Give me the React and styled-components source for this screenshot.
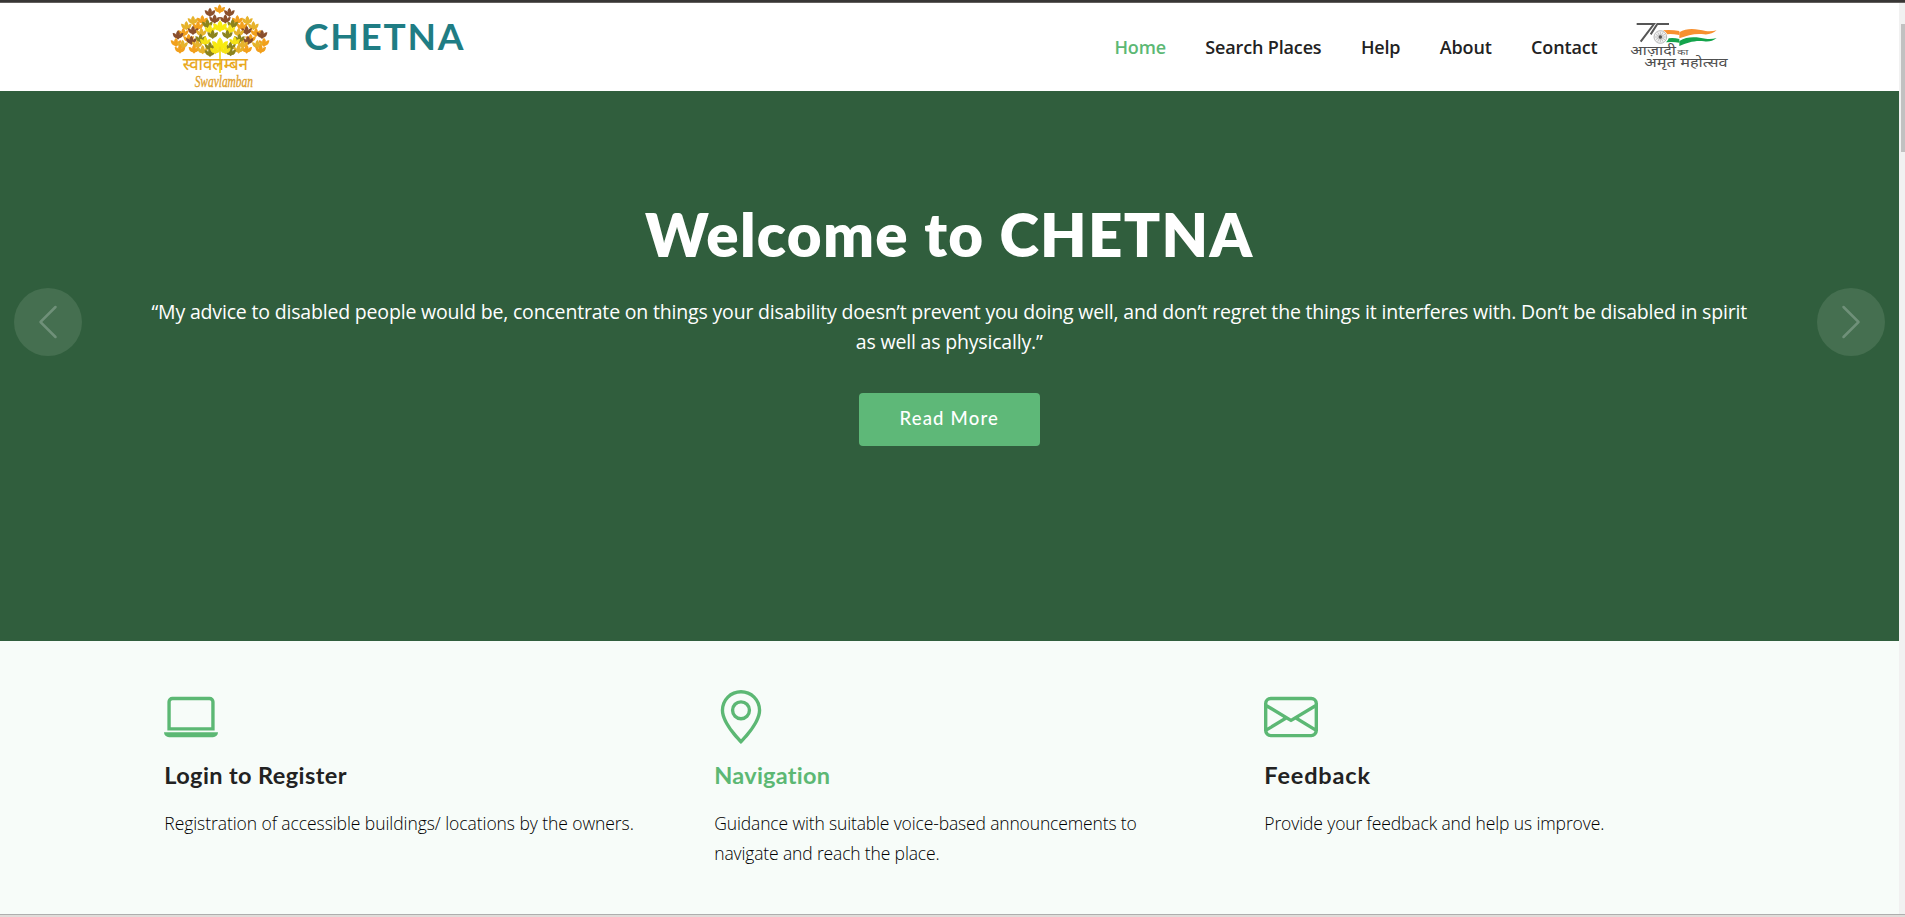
import React from "react";
import styled, { createGlobalStyle } from "styled-components";
import { BsLaptop, BsGeoAlt, BsEnvelope, BsChevronLeft, BsChevronRight } from "react-icons/bs";

const GREEN = "#5cb874";
const heading = `Lato, "Open Sans", sans-serif`;
const body = `"Open Sans", "Noto Sans", sans-serif`;

const GlobalStyle = createGlobalStyle`
  * { box-sizing: border-box; }
  body { margin: 0; background: #fff; overflow: hidden; }
  h1, h2, h3, p { margin: 0; }
  a { text-decoration: none; }
`;

const Frame = styled.div`
  display: flex;
  flex-direction: column;
  width: 100%;
  height: 917px;
  font-family: ${body};
`;

const TopEdge = styled.div`
  height: 3px;
  background: #383635;
  border-bottom: 1px solid #625f5e;
`;

const BottomEdge = styled.div`
  height: 3px;
  background: #e0dcd9;
  border-top: 1px solid #aeaeae;
`;

const Viewport = styled.div`
  display: flex;
  flex: 1;
  min-height: 0;
`;

const Page = styled.div`
  display: flex;
  flex-direction: column;
  flex: 1;
  min-width: 0;
`;

const ScrollTrack = styled.div`
  width: 6px;
  padding: 21px 0 0 2px;
  background: #f1f1f1;
`;

const ScrollThumb = styled.div`
  height: 128px;
  background: #c1c1c1;
`;

const Header = styled.header`
  display: flex;
  justify-content: space-between;
  height: 88px;
  padding: 0 168px;
  background: #fff;
`;

const Brand = styled.div`
  display: flex;
  gap: 32px;
`;

const BrandName = styled.h2`
  padding-top: 11px;
  font: 700 37px/44px ${heading};
  letter-spacing: 1.75px;
  color: #1f7d84;
`;

const NavBar = styled.nav`
  display: flex;
  align-items: flex-start;
`;

const NavLink = styled.a`
  margin: 32px 39.4px 0 0;
  font: 600 18px/25px ${body};
  letter-spacing: -0.15px;
  color: ${(p) => (p.$active ? GREEN : "#222222")};

  &:last-of-type { margin-right: 26.5px; }
`;

const FestivalMark = styled.svg`
  width: 110px;
  height: 60px;
  margin: 12px -3px 0 0;
`;

const Hero = styled.section`
  display: flex;
  align-items: center;
  justify-content: space-between;
  height: 550px;
  padding: 0 14px 0 13.5px;
  background: #305e3d;
`;

const ArrowButton = styled.button`
  display: flex;
  align-items: center;
  justify-content: center;
  width: 68px;
  height: 68px;
  margin-bottom: 88px;
  padding: 0;
  border: 0;
  border-radius: 50%;
  background: #456f50;
  color: #6f9079;
  font-size: 40px;
`;

const HeroCopy = styled.div`
  display: flex;
  flex-direction: column;
  align-items: center;
  height: 100%;
  padding-top: 107px;
  text-align: center;
`;

const HeroTitle = styled.h1`
  font: 800 60px/72px ${heading};
  letter-spacing: 1.3px;
  color: #fff;
`;

const Quote = styled.p`
  margin-top: 27px;
  font: 400 19.5px/30px ${body};
  letter-spacing: -0.18px;
  white-space: nowrap;
  color: #fff;
`;

const ReadMore = styled.a`
  display: block;
  width: 181px;
  height: 53px;
  margin-top: 36px;
  border-radius: 4px;
  background: #5eb878;
  font: 500 18.5px/51px ${heading};
  letter-spacing: 1.2px;
  color: #fff;
`;

const Features = styled.section`
  display: grid;
  grid-template-columns: repeat(3, 550px);
  align-content: start;
  flex: 1;
  padding: 48.5px 0 0 164.3px;
  background: #f7fcf9;
`;

const Feature = styled.article`
  display: flex;
  flex-direction: column;
  width: 480px;

  svg {
    width: 54px;
    height: 54px;
    color: ${GREEN};
  }
`;

const FeatureTitle = styled.h3`
  margin-top: 17.5px;
  font: 700 23.5px/28px ${heading};
  letter-spacing: ${(p) => p.$tracking}px;
  font-variant-ligatures: none;
  color: ${(p) => (p.$active ? GREEN : "#222222")};
`;

const FeatureText = styled.p`
  margin-top: 19px;
  font: 350 17.5px/30px ${body};
  letter-spacing: ${(p) => p.$tracking}px;
  color: #000;
`;

const TreeMark = styled.svg`
  width: 104px;
  height: 88px;
`;

const LEAF_COLORS = { b: "#8a4f2c", o: "#f2a01c", y: "#f5e216", v: "#8c841c", g: "#e6b32c" };
const LEAVES = [
  ["g", 75, 62], ["g", 238, 62], ["o", 103, 60], ["o", 208, 60], ["b", 126, 38], ["b", 184, 38],
  ["g", 55, 78], ["g", 256, 78], ["o", 90, 78], ["o", 222, 78], ["b", 140, 58], ["b", 172, 58],
  ["o", 155, 28], ["b", 75, 92], ["b", 236, 92], ["o", 46, 98], ["o", 264, 98],
  ["v", 118, 72], ["v", 194, 72], ["g", 100, 98], ["g", 212, 98], ["b", 30, 106], ["b", 282, 104],
  ["o", 62, 116], ["o", 248, 116], ["b", 70, 122], ["b", 240, 122], ["y", 126, 88], ["y", 186, 88],
  ["o", 24, 128], ["o", 288, 128], ["g", 44, 134], ["g", 268, 134], ["o", 36, 148], ["o", 278, 148],
  ["g", 88, 132], ["g", 224, 132], ["v", 98, 116], ["v", 214, 116], ["v", 134, 104], ["v", 178, 104],
  ["y", 112, 124], ["y", 200, 124], ["o", 78, 148], ["o", 236, 148], ["g", 104, 150], ["v", 126, 140],
  ["v", 187, 140], ["g", 212, 148], ["v", 126, 158], ["v", 188, 156], ["y", 142, 150], ["y", 172, 150],
];

const Leaf = ({ color, x, y, scale = 1 }) => (
  <path
    transform={`translate(${x} ${y}) scale(${scale})`}
    fill={color}
    d="M0-15Q9-6 4 3Q6-8 16-7Q15 8 4 9L0 13L-4 9Q-15 8-16-7Q-6-8-4 3Q-9-6 0-15Z"
  />
);

const SwavlambanLogo = () => (
  <TreeMark viewBox="0 9 312 264">
    {LEAVES.map(([c, x, y], i) => (
      <Leaf key={i} color={LEAF_COLORS[c]} x={x} y={y} />
    ))}
    <Leaf color="#f8ea10" x={156} y={80} scale={1.3} />
    <Leaf color="#f8ea10" x={156} y={134} scale={1.5} />
    <path d="M156 140V219" stroke="#f3d916" strokeWidth="5" />
    <text x="44" y="209" textLength="196" lengthAdjust="spacingAndGlyphs" fontFamily="Noto Sans, sans-serif" fontSize="53" fontWeight="500" fill="#e9a91f">
      स्वावलम्बन
    </text>
    <text x="80" y="260" textLength="175" lengthAdjust="spacingAndGlyphs" fontFamily="Liberation Serif, serif" fontStyle="italic" fontSize="50" fill="#dfa02a" stroke="#dfa02a" strokeWidth="1">
      Swavlamban
    </text>
  </TreeMark>
);

const SPOKES = Array.from({ length: 12 }, (_, i) => i * 30);

const AmritMahotsavLogo = () => (
  <FestivalMark viewBox="0 0 330 180">
    <path d="M38 27H90L50 80M135 27H100L80 58" fill="none" stroke="#565656" strokeWidth="6" />
    <path d="M117 46Q142 44 166 48V60Q140 56 130 58Q126 50 117 46Z" fill="#f7902f" />
    <path d="M166 52C190 36 220 42 245 48Q262 50 278 46Q262 60 240 58C214 54 190 62 166 70Z" fill="#f7902f" />
    <path d="M134 70Q150 68 166 72V83Q146 79 126 82Q133 77 134 70Z" fill="#14a44c" />
    <path d="M166 78C190 62 220 66 245 71Q262 73 278 69Q262 82 240 79C210 76 190 84 166 93Z" fill="#14a44c" />
    <circle cx="109" cy="66" r="19" fill="#f4f4f4" stroke="#b9b9b9" strokeWidth="3" />
    {SPOKES.map((a) => (
      <path key={a} d="M109 66V50" transform={`rotate(${a} 109 66)`} stroke="#909090" strokeWidth="1.5" />
    ))}
    <circle cx="109" cy="66" r="5" fill="#555" />
    <g fontFamily="Noto Sans, sans-serif" fill="#505050">
      <text x="19" y="121" fontSize="36" textLength="137" lengthAdjust="spacingAndGlyphs">आज़ादी</text>
      <text x="160" y="120" fontSize="22" textLength="33" lengthAdjust="spacingAndGlyphs">का</text>
      <text x="61" y="157" fontSize="37" textLength="250" lengthAdjust="spacingAndGlyphs">अमृत महोत्सव</text>
    </g>
  </FestivalMark>
);

const NAV = ["Home", "Search Places", "Help", "About", "Contact"];

const FEATURES = [
  { icon: BsLaptop, title: "Login to Register", tracking: 0.4, textTracking: -0.07, text: "Registration of accessible buildings/ locations by the owners." },
  { icon: BsGeoAlt, title: "Navigation", tracking: 0.25, active: true, textTracking: -0.15, text: "Guidance with suitable voice-based announcements to navigate and reach the place." },
  { icon: BsEnvelope, title: "Feedback", tracking: 0.85, textTracking: -0.12, text: "Provide your feedback and help us improve." },
];

export default function App() {
  return (
    <Frame>
      <GlobalStyle />
      <TopEdge />
      <Viewport>
        <Page>
          <Header>
            <Brand>
              <SwavlambanLogo />
              <BrandName>CHETNA</BrandName>
            </Brand>
            <NavBar>
              {NAV.map((label, i) => (
                <NavLink key={label} $active={i === 0}>{label}</NavLink>
              ))}
              <AmritMahotsavLogo />
            </NavBar>
          </Header>
          <Hero>
            <ArrowButton aria-label="Previous"><BsChevronLeft /></ArrowButton>
            <HeroCopy>
              <HeroTitle>Welcome to CHETNA</HeroTitle>
              <Quote>
                “My advice to disabled people would be, concentrate on things your disability doesn’t prevent you doing well, and don’t regret the things it interferes with. Don’t be disabled in spirit
                <br />
                as well as physically.”
              </Quote>
              <ReadMore>Read More</ReadMore>
            </HeroCopy>
            <ArrowButton aria-label="Next"><BsChevronRight /></ArrowButton>
          </Hero>
          <Features>
            {FEATURES.map(({ icon: Icon, title, tracking, textTracking, active, text }) => (
              <Feature key={title}>
                <Icon />
                <FeatureTitle $tracking={tracking} $active={active}>{title}</FeatureTitle>
                <FeatureText $tracking={textTracking}>{text}</FeatureText>
              </Feature>
            ))}
          </Features>
        </Page>
        <ScrollTrack><ScrollThumb /></ScrollTrack>
      </Viewport>
      <BottomEdge />
    </Frame>
  );
}
